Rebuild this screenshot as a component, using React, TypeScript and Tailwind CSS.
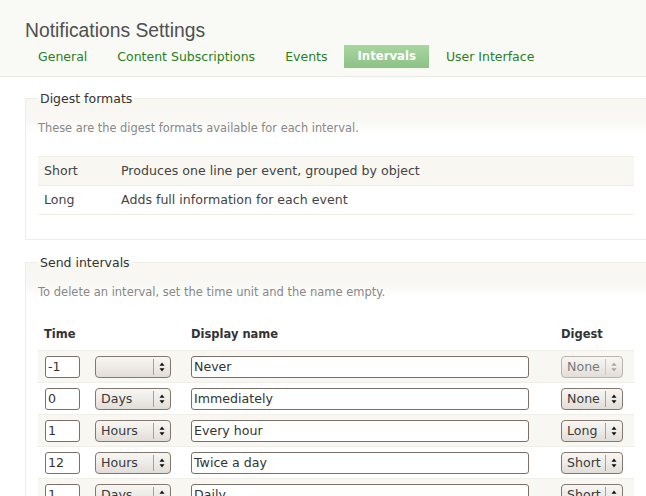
import React from 'react';

const tabs = ['General', 'Content Subscriptions', 'Events', 'Intervals', 'User Interface'];

const formats = [
    { name: 'Short', desc: 'Produces one line per event, grouped by object' },
    { name: 'Long', desc: 'Adds full information for each event' },
];

const intervals = [
    { time: '-1', unit: '', name: 'Never', digest: 'None', disabled: true },
    { time: '0', unit: 'Days', name: 'Immediately', digest: 'None' },
    { time: '1', unit: 'Hours', name: 'Every hour', digest: 'Long' },
    { time: '12', unit: 'Hours', name: 'Twice a day', digest: 'Short' },
    { time: '1', unit: 'Days', name: 'Daily', digest: 'Short' },
    { time: '7', unit: 'Days', name: 'Weekly', digest: 'Long' },
];

function Arrows({ disabled }: { disabled?: boolean }) {
    const fill = disabled ? '#a9a39c' : '#111';
    return (
        <svg width="6" height="10" viewBox="0 0 6 10">
            <path d="M3 0.5 L5.5 3.8 L0.5 3.8 Z" fill={fill} />
            <path d="M0.5 6.2 L5.5 6.2 L3 9.5 Z" fill={fill} />
        </svg>
    );
}

function Select({ value, className, disabled }: { value: string; className: string; disabled?: boolean }) {
    return (
        <div
            className={`flex h-[22px] items-center rounded-[4px] border bg-linear-to-b from-[#f7f6f3] via-[#eeece8] to-[#e1ddd7] ${className} ${
                disabled ? 'border-[#bbb4ac] text-[#7a7a7a]' : 'border-[#83786e] text-[#3a3a3a]'
            }`}
        >
            <span className="flex-1 overflow-hidden whitespace-nowrap pl-[5px] leading-[20px]">{value}</span>
            <span className={`h-[16px] w-px ${disabled ? 'bg-[#cdc7c0]' : 'bg-[#a9a096]'}`} />
            <span className="flex w-[16px] justify-center">
                <Arrows disabled={disabled} />
            </span>
        </div>
    );
}

function TextInput({ value, className }: { value: string; className: string }) {
    return (
        <div className={`h-[22px] rounded-[3px] border border-[#7b7067] bg-white pl-[2px] leading-[20px] text-[#333] ${className}`}>
            {value}
        </div>
    );
}

export default function App() {
    return (
        <div className="h-[496px] w-[646px] overflow-hidden bg-white font-['DejaVu_Sans',sans-serif] text-[12.6px] text-[#444]">
            <div className="border-b border-[#ebebe5] bg-[#f9f9f6] pt-[19px] pb-[8px] pl-[25px]">
                <h1 className="font-['Liberation_Sans',Arial,sans-serif] text-[19.3px] leading-[23px] text-[#505050]">
                    Notifications Settings
                </h1>
                <nav className="mt-[3px] flex gap-[4px]">
                    {tabs.map((tab) =>
                        tab === 'Intervals' ? (
                            <span
                                key={tab}
                                className="bg-linear-to-b from-[#a9d6a1] to-[#8cc283] px-[13px] text-[11.7px] font-bold leading-[23px] text-white"
                            >
                                {tab}
                            </span>
                        ) : (
                            <span key={tab} className="px-[13px] text-[12.5px] leading-[23px] text-[#29801c]">
                                {tab}
                            </span>
                        )
                    )}
                </nav>
            </div>

            <fieldset className="mt-[14px] mr-[-1px] ml-[25px] border border-[#eeede8] bg-[linear-gradient(to_bottom,#f8f7f2,#f9f8f4_22px,#ffffff_34px)] px-[12px] pb-[24px]">
                <legend className="px-[2px] text-[12.5px] leading-[15px] text-[#333]">Digest formats</legend>
                <p className="pt-[16px] text-[11.4px] leading-[13px] text-[#888]">
                    These are the digest formats available for each interval.
                </p>
                <div className="mt-[21px] border-t border-[#f0eee8]">
                    {formats.map((f, i) => (
                        <div
                            key={f.name}
                            className={`grid h-[29px] grid-cols-[77px_1fr] items-center border-b border-[#efede6] ${
                                i % 2 === 0 ? 'bg-[#f8f7f2]' : 'bg-white'
                            }`}
                        >
                            <span className="px-[6px]">{f.name}</span>
                            <span className="px-[6px]">{f.desc}</span>
                        </div>
                    ))}
                </div>
            </fieldset>

            <fieldset className="mt-[15px] mr-[-1px] ml-[25px] border border-[#eeede8] bg-[linear-gradient(to_bottom,#f8f7f2,#f9f8f4_22px,#ffffff_34px)] px-[12px] pb-[24px]">
                <legend className="px-[2px] text-[12.5px] leading-[15px] text-[#333]">Send intervals</legend>
                <p className="pt-[16px] text-[11.5px] leading-[13px] text-[#888]">
                    To delete an interval, set the time unit and the name empty.
                </p>
                <div className="mt-[21px]">
                    <div className="grid h-[30px] grid-cols-[50px_97px_370px_79px] items-center text-[11.5px] font-bold text-[#333]">
                        <span className="pl-[6px]">Time</span>
                        <span />
                        <span className="pl-[6px]">Display name</span>
                        <span className="pl-[6px]">Digest</span>
                    </div>
                    {intervals.map((r, i) => (
                        <div
                            key={i}
                            className={`grid h-[32px] grid-cols-[50px_97px_370px_79px] items-center border-t border-[#f0eee8] ${
                                i % 2 === 0 ? 'bg-[#f8f7f2]' : 'bg-white'
                            }`}
                        >
                            <div className="pl-[7px]">
                                <TextInput value={r.time} className="w-[35px]" />
                            </div>
                            <div className="pl-[7px]">
                                <Select value={r.unit} className="w-[76px]" />
                            </div>
                            <div className="pl-[6px]">
                                <TextInput value={r.name} className="w-[338px]" />
                            </div>
                            <div className="pl-[6px]">
                                <Select value={r.digest} className="w-[62px]" disabled={r.disabled} />
                            </div>
                        </div>
                    ))}
                </div>
            </fieldset>
        </div>
    );
}
